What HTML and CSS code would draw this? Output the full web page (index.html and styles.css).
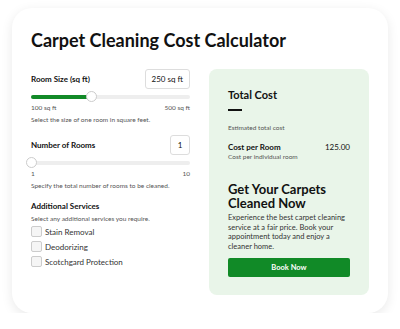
FILE: index.html
```html
<!DOCTYPE html>
<html>
<head>
<meta charset="utf-8">
<title>Carpet Cleaning Cost Calculator</title>
<link rel="stylesheet" href="styles.css">
</head>
<body>
<div class="card">
	<h1 class="title">Carpet Cleaning Cost Calculator</h1>
	<div class="cols">
		<div class="inputs">
			<div class="field">
				<div class="field-head">
					<label class="label">Room Size (sq ft)</label>
					<div class="valbox">250 sq ft</div>
				</div>
				<div class="slider">
					<div class="fill" style="width: 37.5%"></div>
					<div class="thumb" style="left: 37.5%"></div>
				</div>
				<div class="range"><span>100 sq ft</span><span>500 sq ft</span></div>
				<div class="hint">Select the size of one room in square feet.</div>
			</div>
			<div class="field">
				<div class="field-head">
					<label class="label">Number of Rooms</label>
					<div class="valbox">1</div>
				</div>
				<div class="slider">
					<div class="fill" style="width: 0%"></div>
					<div class="thumb" style="left: 0%"></div>
				</div>
				<div class="range"><span>1</span><span>10</span></div>
				<div class="hint">Specify the total number of rooms to be cleaned.</div>
			</div>
			<div class="field">
				<div class="label">Additional Services</div>
				<div class="hint">Select any additional services you require.</div>
				<div class="checks">
					<label class="check"><span class="box"></span>Stain Removal</label>
					<label class="check"><span class="box"></span>Deodorizing</label>
					<label class="check"><span class="box"></span>Scotchgard Protection</label>
				</div>
			</div>
		</div>
		<div class="result">
			<div class="total-title">Total Cost</div>
			<div class="total-dash"></div>
			<div class="small">Estimated total cost</div>
			<div class="per-row">
				<span class="per-label">Cost per Room</span>
				<span class="per-val">125.00</span>
			</div>
			<div class="small">Cost per individual room</div>
			<h2 class="cta-title">Get Your Carpets Cleaned Now</h2>
			<p class="cta-text">Experience the best carpet cleaning service at a fair price. Book your appointment today and enjoy a cleaner home.</p>
			<button class="book">Book Now</button>
		</div>
	</div>
</div>
</body>
</html>
```
FILE: styles.css
```css
body {
	margin: 0;
	background: #fff;
	font-family: Lato, "Open Sans", sans-serif;
	color: #111;
}
.card {
	margin: 8px 12px 0 12px;
	width: 376px;
	height: 305px;
	box-sizing: border-box;
	border-radius: 20px;
	background: #fff;
	box-shadow: 0 3px 12px rgba(0, 0, 0, 0.09);
	padding: 20px 19px 0 19px;
}
.title {
	margin: 0 0 17px 0;
	font-size: 18px;
	font-weight: 700;
	line-height: 24px;
}
.cols {
	display: flex;
	gap: 19px;
}
.inputs {
	width: 159px;
}
.field {
	margin-bottom: 11px;
}
.field-head {
	display: flex;
	justify-content: space-between;
	align-items: center;
}
.label {
	font-size: 8px;
	font-weight: 700;
}
.valbox {
	border: 1px solid #ddd;
	border-radius: 3px;
	font-size: 8px;
	height: 18px;
	line-height: 18px;
	padding: 0 6px;
	min-width: 6px;
	text-align: center;
}
.slider {
	position: relative;
	height: 4px;
	background: #eee;
	border-radius: 2px;
	margin: 6px 0 4px 0;
}
.fill {
	height: 4px;
	background: #128a28;
	border-radius: 2px;
}
.thumb {
	position: absolute;
	top: -4px;
	width: 11px;
	height: 11px;
	margin-left: -5px;
	box-sizing: border-box;
	border: 1px solid #ccc;
	border-radius: 50%;
	background: #fff;
}
.range {
	display: flex;
	justify-content: space-between;
	font-size: 6.5px;
	color: #555;
	line-height: 9px;
}
.hint {
	font-size: 6.5px;
	color: #555;
	line-height: 9px;
	margin-top: 3px;
}
.checks {
	margin-top: 1px;
}
.check {
	display: flex;
	align-items: center;
	gap: 3px;
	font-size: 8px;
	color: #333;
	height: 15px;
}
.box {
	width: 9px;
	height: 9px;
	border: 1px solid #ccc;
	border-radius: 2px;
	background: #f5f5f5;
}
.result {
	width: 160px;
	height: 226px;
	box-sizing: border-box;
	background: #e9f5e9;
	border-radius: 8px;
	padding: 19px 19px 0 19px;
}
.total-title {
	font-size: 11px;
	font-weight: 700;
	line-height: 14px;
}
.total-dash {
	width: 14px;
	height: 2px;
	background: #111;
	margin: 7px 0 12px 0;
}
.small {
	font-size: 6.5px;
	color: #555;
	line-height: 9px;
}
.per-row {
	display: flex;
	justify-content: space-between;
	margin-top: 10px;
	font-size: 8px;
	line-height: 10px;
}
.per-label {
	font-weight: 700;
}
.cta-title {
	margin: 21px 0 3px 0;
	font-size: 13px;
	font-weight: 700;
	line-height: 14px;
}
.cta-text {
	margin: 0 0 7px 0;
	font-size: 7.5px;
	line-height: 9.5px;
	color: #333;
}
.book {
	display: block;
	width: 100%;
	height: 19px;
	border: none;
	border-radius: 2px;
	background: #118a27;
	color: #fff;
	font-family: inherit;
	font-size: 7.5px;
	font-weight: 700;
}
```
